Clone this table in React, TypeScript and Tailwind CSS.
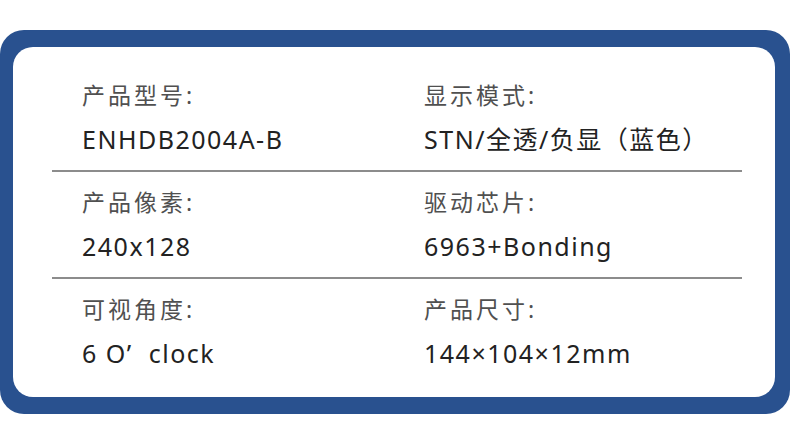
const specs = [
  [
    { label: "产品型号:", value: "ENHDB2004A-B" },
    { label: "显示模式:", value: "STN/全透/负显（蓝色）" },
  ],
  [
    { label: "产品像素:", value: "240x128" },
    { label: "驱动芯片:", value: "6963+Bonding" },
  ],
  [
    { label: "可视角度:", value: "6 O’  clock" },
    { label: "产品尺寸:", value: "144×104×12mm" },
  ],
];

export default function App() {
  return (
    <div
      className="w-[790px] h-[447px] bg-white pt-[30px]"
      style={{ fontFamily: '"Noto Sans", "Noto Sans CJK SC", sans-serif' }}
    >
      {/* 蓝色外框 */}
      <div className="h-[384px] rounded-[24px] bg-[#29518f] pt-[17px] pb-[17px] pl-[13px] pr-[15px]">
        <div className="h-full rounded-[20px] bg-white pl-[39px] pr-[33px] pt-[18px]">
          {specs.map((row, i) => (
            <div
              key={i}
              className={
                i < specs.length - 1
                  ? "grid grid-cols-[342px_1fr] pl-[30px] pt-[15px] h-[107px] border-b-2 border-[#8c8c8c]"
                  : "grid grid-cols-[342px_1fr] pl-[30px] pt-[15px]"
              }
            >
              {row.map((item) => (
                <div key={item.label} className="flex flex-col">
                  <div className="text-[23px] leading-[31px] tracking-[3px] text-[#505050]">
                    {item.label}
                  </div>
                  <div className="mt-[12px] text-[25px] leading-[32px] tracking-[1.5px] text-[#222] whitespace-pre">
                    {item.value}
                  </div>
                </div>
              ))}
            </div>
          ))}
        </div>
      </div>
    </div>
  );
}
